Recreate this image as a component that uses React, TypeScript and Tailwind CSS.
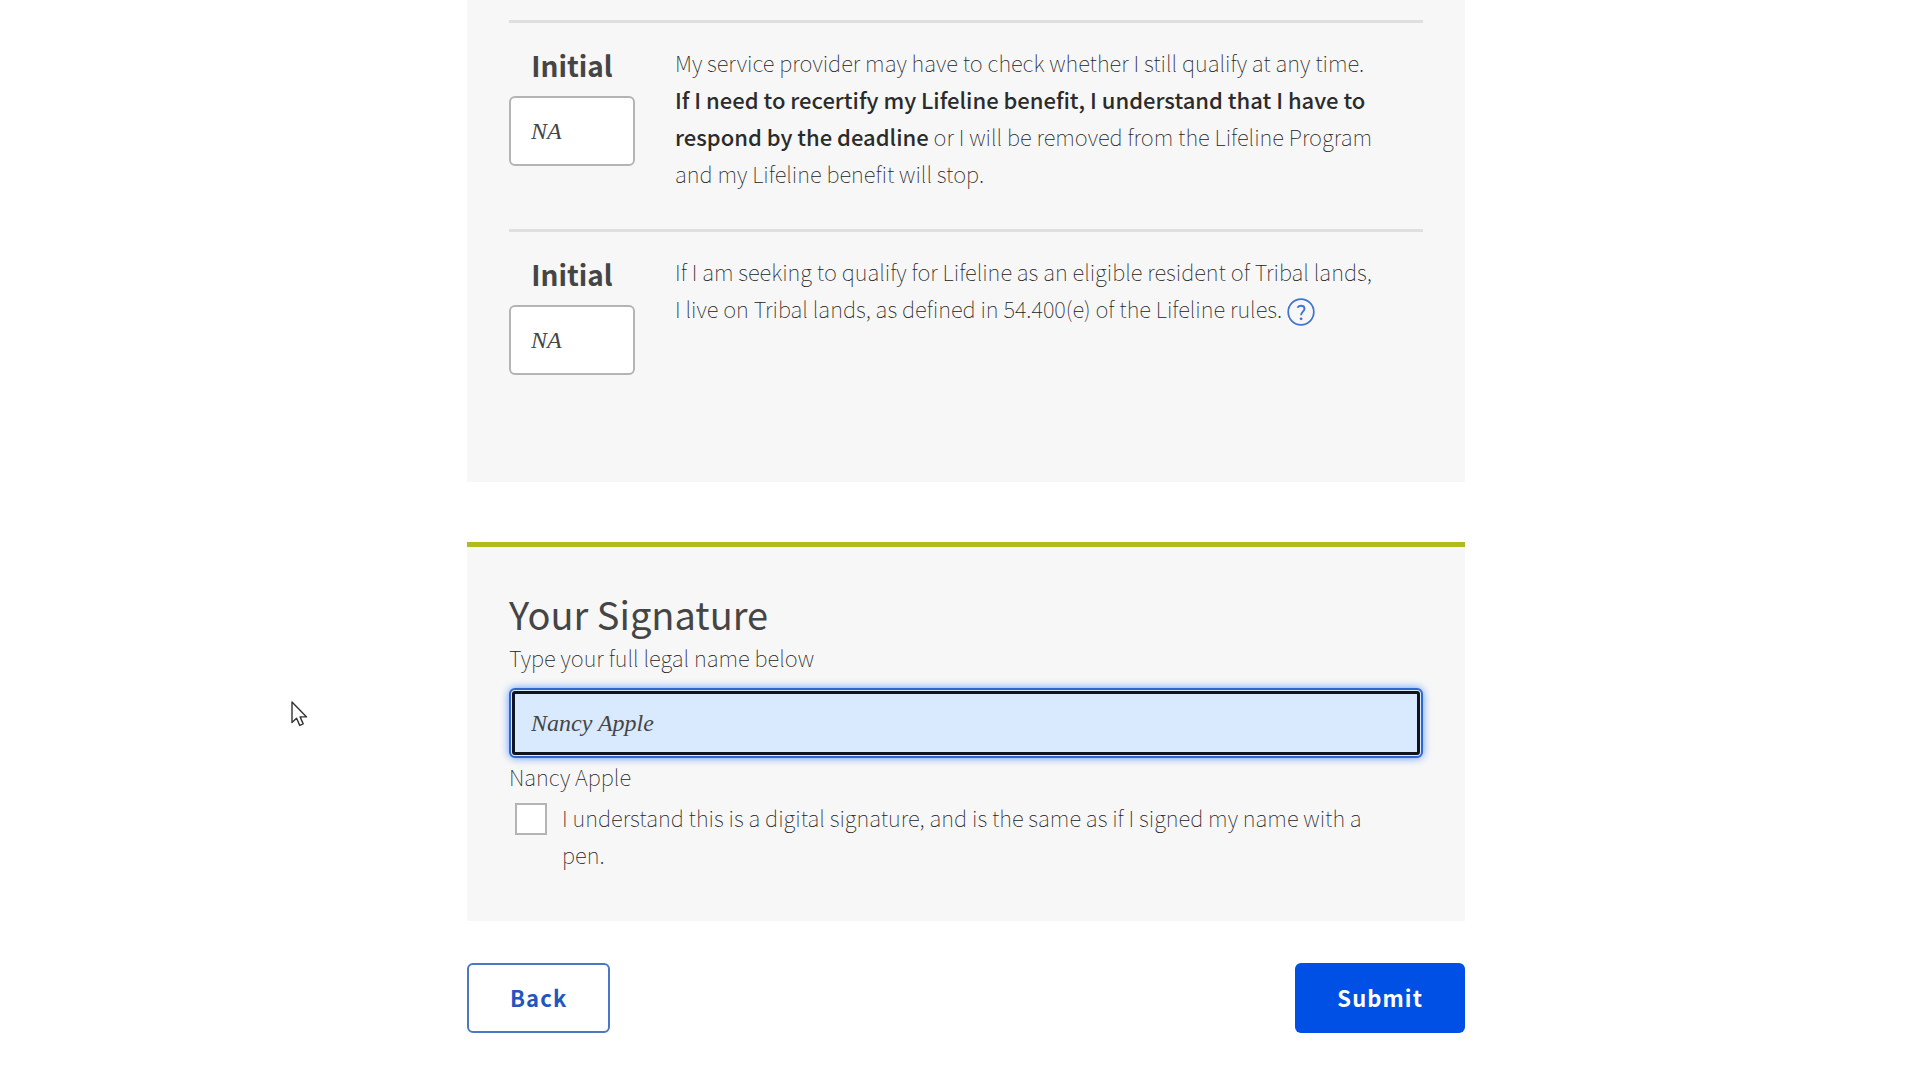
import React, { useState } from "react";

interface InitialRowProps {
  id: string;
  children: React.ReactNode;
}

// One statement that the applicant has to initial
const InitialRow = ({ id, children }: InitialRowProps) => {
  return (
    <div className="flex items-start gap-10 border-t-3 border-[#dfdfdf] pt-[21px] pb-[37px]">
      <div className="w-[126px] shrink-0">
        <label
          htmlFor={id}
          className="block text-center text-[28px] leading-[42px] font-bold text-[#454545]"
        >
          Initial
        </label>
        <input
          id={id}
          type="text"
          defaultValue="NA"
          className="mt-2.5 h-[70px] w-full rounded-md border-2 border-[#b4b4b4] bg-white px-5 font-['Liberation_Serif',serif] text-2xl text-[#454545] italic"
        />
      </div>
      <p className="min-w-0 flex-1 pr-11">{children}</p>
    </div>
  );
};

const HelpIcon = () => (
  <svg viewBox="0 0 28 28" className="h-7 w-7" fill="none" stroke="#3f73d3" aria-hidden="true">
    <circle cx="14" cy="14" r="12.8" strokeWidth="1.7" />
    <path d="M10.4 9.6C11.3 8.5 12.6 7.8 14.1 7.8c2 0 3.4 1.2 3.4 3 0 2.6-3.6 3.3-3.4 6.5" strokeWidth="1.9" />
    <circle cx="14.1" cy="20.8" r="1.4" fill="#3f73d3" stroke="none" />
  </svg>
);

const PointerIcon = () => (
  <svg viewBox="0 0 17 26" className="h-[26px] w-[17px]" aria-hidden="true">
    <path
      d="M1 1v20.5l4.6-4.3 3.1 7.2 3.5-1.5-3.1-7H15.6z"
      fill="#fff"
      stroke="#333"
      strokeWidth="1.4"
      strokeLinejoin="round"
    />
  </svg>
);

export default function App() {
  const [name, setName] = useState("Nancy Apple");

  return (
    <div className="relative min-h-screen bg-white pb-12 pl-3 font-['Noto_Sans_CJK_SC',sans-serif] text-[22px] leading-[37px] font-thin text-[#222]">
      <main className="mx-auto w-full max-w-[998px]">
        {/* Statements */}
        <section className="bg-[#f7f7f7] px-[42px] pt-5 pb-[70px]">
          <InitialRow id="initial-recertify">
            My service provider may have to check whether I still qualify at any time.{" "}
            <strong className="font-medium text-[#2b2b2b]">
              If I need to recertify my Lifeline benefit, I understand that I have to respond by the
              deadline
            </strong>{" "}
            or I will be removed from the Lifeline Program and my Lifeline benefit will stop.
          </InitialRow>
          <InitialRow id="initial-tribal">
            If I am seeking to qualify for Lifeline as an eligible resident of Tribal lands, I live
            on Tribal lands, as defined in 54.400(e) of the Lifeline rules.{" "}
            <button type="button" aria-label="Help" className="inline-block h-7 w-7 align-middle">
              <HelpIcon />
            </button>
          </InitialRow>
        </section>

        {/* Signature */}
        <section className="mt-[60px] border-t-5 border-[#b2bb1e] bg-[#f7f7f7] px-[42px] pt-[42px] pb-12">
          <h2 className="text-[38px] leading-[50px] font-normal text-[#454545]">Your Signature</h2>
          <label htmlFor="full-name" className="block">
            Type your full legal name below
          </label>
          <input
            id="full-name"
            type="text"
            value={name}
            onChange={(e) => setName(e.target.value)}
            className="mt-3 h-[70px] w-full rounded-md border-2 border-[#2f66d0] bg-[#d9eaff] px-5 font-['Liberation_Serif',serif] text-2xl text-[#454545] italic shadow-[0_0_8px_#5b95ff] outline-3 -outline-offset-6 outline-[#10151c]"
          />
          <p>{name}</p>
          <div className="mt-1 flex items-start gap-[15px] pl-1.5">
            <input
              id="digital-signature"
              type="checkbox"
              className="mt-1 h-8 w-8 shrink-0 appearance-none border-2 border-[#b4b4b4] bg-white checked:bg-[#0050e6]"
            />
            <label htmlFor="digital-signature" className="pr-10">
              I understand this is a digital signature, and is the same as if I signed my name with
              a pen.
            </label>
          </div>
        </section>

        <div className="mt-[42px] flex justify-between">
          <button
            type="button"
            className="h-[70px] rounded-md border-2 border-[#4a78c4] bg-white px-[41px] pb-0.5 font-bold tracking-wider text-[#1f56c0]"
          >
            Back
          </button>
          <button
            type="submit"
            className="h-[70px] rounded-md bg-[#0050e6] px-[42px] pb-0.5 font-bold tracking-wider text-white"
          >
            Submit
          </button>
        </div>
      </main>

      {/* Mouse pointer */}
      <div className="pointer-events-none absolute top-[701px] left-[291px]">
        <PointerIcon />
      </div>
    </div>
  );
}
